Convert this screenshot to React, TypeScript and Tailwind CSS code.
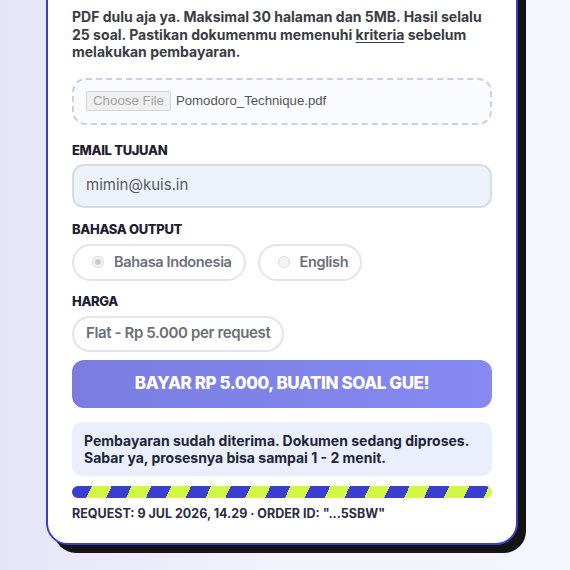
import React from "react";

// Upload + payment form card for the quiz generator. The card's header sits
// above the fold; this view starts at the upload instructions.

const body = { fontFamily: "Inter, 'Liberation Sans', sans-serif" };
const system = { fontFamily: "'Liberation Sans', Arial, sans-serif" };

function Label({ children }: { children: React.ReactNode }) {
  return (
    <div className="text-[13px] leading-4 font-extrabold tracking-tight text-[#1e2030] uppercase">
      {children}
    </div>
  );
}

function Radio({ label, checked }: { label: string; checked?: boolean }) {
  return (
    <label className="flex h-[37px] items-center gap-[10px] rounded-full border-2 border-[#e4e5e8] bg-white pl-[18px] pr-3">
      <span className="flex h-[12px] w-[12px] items-center justify-center rounded-full border border-[#dcdcdc] bg-[#f4f4f4]">
        {checked && <span className="h-[6px] w-[6px] rounded-full bg-[#c9c9c9]" />}
      </span>
      <span className="text-[14.5px] font-semibold tracking-tight text-[#6b6f78]">{label}</span>
    </label>
  );
}

export default function App() {
  return (
    <div className="h-[570px] overflow-hidden bg-gradient-to-r from-[#e5e5f8] via-[#f2f3fb] to-[#f5f6fc]" style={body}>
      <div className="ml-[46px] -mt-[20px] w-[472px] rounded-b-[22px] border-2 border-[#3a3fcb] bg-white px-6 pt-[26px] pb-[21px] shadow-[8px_8px_0_#141414]">
        <p className="text-[14px] leading-[17.5px] font-bold text-[#3a3d45]">
          PDF dulu aja ya. Maksimal 30 halaman dan 5MB. Hasil selalu 25 soal. Pastikan dokumenmu memenuhi{" "}
          <span className="underline underline-offset-2">kriteria</span> sebelum melakukan pembayaran.
        </p>

        <div className="mt-[17px] flex h-[47px] items-center rounded-[14px] border-2 border-dashed border-[#cbcdee] bg-[#fafbfe] px-3">
          <span
            className="flex h-[20px] items-center rounded-[2px] border border-[#d6d6d6] bg-[#efefef] px-[6px] text-[13.3px] text-[#a3a3a3]"
            style={system}
          >
            Choose File
          </span>
          <span className="ml-[5px] text-[13.2px] text-[#555]" style={system}>
            Pomodoro_Technique.pdf
          </span>
        </div>

        <div className="mt-[17px]">
          <Label>Email tujuan</Label>
        </div>
        <div className="mt-[6px] flex h-[44px] items-center rounded-[12px] border-2 border-[#d6dce6] bg-[#edf2fb] px-3 text-[15px] text-[#565a62]">
          mimin@kuis.in
        </div>

        <div className="mt-[13px]">
          <Label>Bahasa output</Label>
        </div>
        <div className="mt-[7px] flex gap-3">
          <Radio label="Bahasa Indonesia" checked />
          <Radio label="English" />
        </div>

        <div className="mt-[12px]">
          <Label>Harga</Label>
        </div>
        <div className="mt-[7px] flex">
          <div className="flex h-[36px] items-center rounded-full border-2 border-[#e4e5e8] px-3 text-[15px] font-semibold tracking-tight text-[#6b6f78]">
            Flat - Rp 5.000 per request
          </div>
        </div>

        <button className="mt-2 flex h-[48px] w-full items-center justify-center rounded-[12px] bg-gradient-to-r from-[#7a7ddf] to-[#868af2] text-[17px] font-extrabold tracking-tight text-white">
          BAYAR RP 5.000, BUATIN SOAL GUE!
        </button>

        <div className="mt-[14px] rounded-[10px] bg-[#eaeffb] px-3 py-[10px] text-[14px] leading-[17px] font-bold text-[#23263a]">
          Pembayaran sudah diterima. Dokumen sedang diproses. Sabar ya, prosesnya bisa sampai 1 - 2 menit.
        </div>

        <div
          className="mt-[10px] h-[12px] rounded-full"
          style={{
            background: "repeating-linear-gradient(115deg, #3a3fd0 0 18px, #d3f745 18px 36px)",
          }}
        />

        <div className="mt-2 text-[12.5px] leading-4 font-bold text-[#2a2d45]">
          REQUEST: 9 JUL 2026, 14.29 · ORDER ID: "...5SBW"
        </div>
      </div>
    </div>
  );
}
